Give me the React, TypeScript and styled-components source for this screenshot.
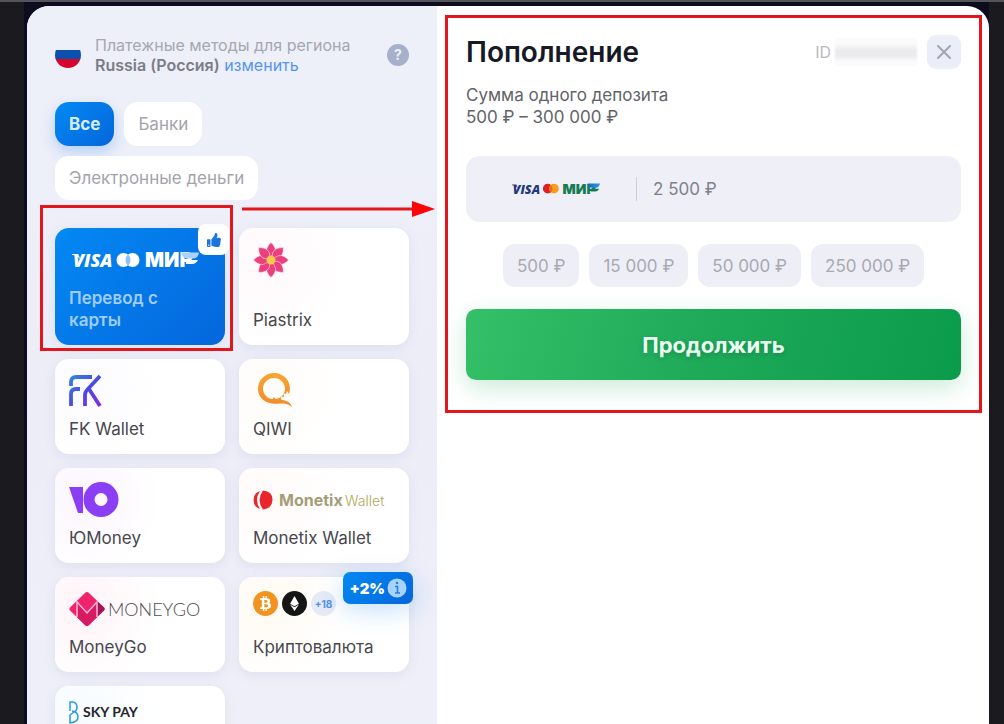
import React from "react";
import styled, { createGlobalStyle, css } from "styled-components";
import { FaBtc, FaEthereum, FaThumbsUp } from "react-icons/fa";

const GlobalStyle = createGlobalStyle`
  *, *::before, *::after { box-sizing: border-box; }
  body {
    margin: 0;
    background: #1b1b1f;
    font-family: Inter, "Noto Sans", sans-serif;
    color: #46474d;
  }
  button, input { font: inherit; color: inherit; }
  button { border: 0; padding: 0; cursor: pointer; }
  h1, p { margin: 0; }
  svg { overflow: visible; }
`;

const Page = styled.div`
  height: 100vh;
  overflow: hidden;
  border-top: 2px solid #54545a;
  padding: 0 15px 0 24px;
`;

const Backdrop = styled.div`
  min-height: 100%;
  padding: 4px 0 0 3px;
  background: #0c0c1e;
`;

const Modal = styled.main`
  display: flex;
  min-height: 100vh;
  border-radius: 22px 22px 0 0;
  background: #ffffff;
  overflow: hidden;
`;

const Methods = styled.section`
  flex: 0 0 410px;
  padding: 29px 28px 28px;
  background: linear-gradient(180deg, #edf0f9, #ededf8 50%, #eef0f8);
`;

const Region = styled.header`
  display: flex;
  align-items: center;
  gap: 14px;
  height: 40px;
  font-size: 16px;
  line-height: 20px;
  color: #a6a7af;

  svg { flex: none; }
  p { flex: 1; }
  strong { font-weight: 600; color: #7b7d86; }
  a { color: #5595f0; text-decoration: none; }
`;

const Help = styled.button`
  width: 22px;
  height: 22px;
  border-radius: 50%;
  background: #a6b0ca;
  color: #eef0f9;
  font-size: 14px;
  font-weight: 700;
  line-height: 22px;
`;

const Tabs = styled.nav`
  display: flex;
  flex-wrap: wrap;
  gap: 10px;
  margin: 27px 0 28px;
`;

const Tab = styled.button<{ $active?: boolean }>`
  height: 44px;
  padding: 0 14px;
  border-radius: 14px;
  background: #ffffff;
  color: #a3a4aa;
  font-size: 17px;
  ${(p) =>
    p.$active &&
    css`
      background: linear-gradient(135deg, #0389f3, #0566dc);
      color: #d9ecff;
      font-weight: 700;
      box-shadow: 0 6px 14px rgba(20, 120, 240, 0.25);
    `}
`;

const Grid = styled.div`
  display: grid;
  grid-template-columns: 1fr 1fr;
  gap: 14px;
`;

const Cell = styled.div`
  position: relative;
  display: grid;
`;

const Card = styled.button<{ $active?: boolean; $tint?: string }>`
  display: flex;
  flex-direction: column;
  align-items: flex-start;
  justify-content: space-between;
  gap: 9px;
  min-height: 95px;
  padding: 14px;
  border-radius: 14px;
  text-align: left;
  font-size: 17px;
  line-height: 22px;
  background: ${(p) =>
    p.$active
      ? "linear-gradient(135deg, #0389f3, #0566dc)"
      : `radial-gradient(circle at 16% 32%, ${p.$tint ?? "#ffffff"}, #ffffff 50%)`};
  box-shadow: 0 3px 12px rgba(90, 110, 170, 0.1);
  ${(p) => p.$active && css`color: #9fcdfc; font-weight: 600;`}
`;

const LogoRow = styled.span<{ $top?: boolean }>`
  display: flex;
  align-items: ${(p) => (p.$top ? "flex-start" : "center")};
  gap: 4px;
  height: 36px;
`;

const Coin = styled.span<{ $bg: string }>`
  display: grid;
  place-items: center;
  width: 25px;
  height: 25px;
  border-radius: 50%;
  background: ${(p) => p.$bg};
  color: #ffffff;
`;

const MoreCoins = styled(Coin)`
  color: #4f90ea;
  font-size: 10px;
  font-weight: 700;
`;

const Liked = styled.span`
  position: absolute;
  top: -4px;
  right: -4px;
  display: grid;
  place-items: center;
  width: 31px;
  height: 31px;
  border-radius: 8px;
  background: #ffffff;
  color: #1a76df;
`;

const Bonus = styled.span`
  position: absolute;
  top: -5px;
  right: -4px;
  display: flex;
  align-items: center;
  gap: 2px;
  height: 32px;
  padding: 0 6px;
  border-radius: 7px;
  background: linear-gradient(135deg, #0389f3, #0566dc);
  box-shadow: 0 6px 24px rgba(20, 130, 240, 0.25);
  color: #ffffff;
  font-size: 15px;
  font-weight: 900;
`;

const Outline = styled.span`
  position: absolute;
  border: 3px solid #e3161b;
  pointer-events: none;
`;

const CardOutline = styled(Outline)`
  inset: -23px -8px -6px -15px;
`;

const PanelOutline = styled(Outline)`
  inset: -20px -21px -33px -21px;
`;

const Arrow = styled.svg`
  position: absolute;
  z-index: 2;
  top: -28px;
  left: 187px;
  pointer-events: none;
`;

const Deposit = styled.section`
  flex: 1;
  min-width: 0;
  padding: 29px 28px 28px 29px;
`;

const Form = styled.form`
  position: relative;
`;

const Head = styled.header`
  display: flex;
  align-items: center;
  height: 34px;
`;

const Title = styled.h1`
  flex: 1;
  color: #171a26;
  font-size: 28px;
  font-weight: 600;
  line-height: 34px;
`;

const Account = styled.span`
  display: flex;
  align-items: center;
  gap: 4px;
  color: #b9bac0;
  font-size: 16px;
`;

const Masked = styled.span`
  width: 82px;
  height: 28px;
  background: linear-gradient(180deg, #fcfbfc 20%, #ebeaec 45%, #ebeaec 65%, #fcfbfc 85%);
  filter: blur(1px);
`;

const Close = styled.button`
  display: grid;
  place-items: center;
  width: 34px;
  height: 34px;
  margin-left: 10px;
  border-radius: 9px;
  background: #ebeef8;
`;

const Limits = styled.p`
  margin: 15px 0 28px;
  color: #626369;
  font-size: 17px;
  line-height: 22px;
`;

const AmountBox = styled.label`
  display: flex;
  align-items: center;
  height: 66px;
  padding-left: 44px;
  border-radius: 14px;
  background: #eeeff7;
`;

const Amount = styled.input`
  flex: 1;
  min-width: 0;
  height: 24px;
  margin-left: 36px;
  padding: 0 0 0 16px;
  border: 0;
  border-left: 1px solid #cdced6;
  outline: 0;
  background: transparent;
  color: #808188;
  font-size: 17px;
`;

const Presets = styled.div`
  display: flex;
  flex-wrap: wrap;
  justify-content: center;
  gap: 10px;
  margin: 22px 0;
`;

const Preset = styled.button`
  height: 43px;
  padding: 0 14px;
  border-radius: 12px;
  background: #eeeef7;
  color: #a8a9b1;
  font-size: 17px;
`;

const Submit = styled.button`
  width: 100%;
  height: 71px;
  border-radius: 10px;
  background: linear-gradient(105deg, #34bf68, #1fab5a 45%, #0a9b4b);
  box-shadow: 0 8px 24px rgba(20, 165, 85, 0.22);
  color: #ecfff3;
  font-size: 22px;
  font-weight: 700;
  text-shadow: 0 2px 4px rgba(0, 70, 30, 0.25);
`;

const PaymentSystems = ({ width, mono }: { width: number; mono?: boolean }) => (
  <svg width={width} height={(width * 28) / 130} viewBox="0 -4 130 28" role="img" aria-label="Visa Mastercard МИР">
    <defs>
      <linearGradient id="wing" x1="0" x2="1">
        <stop offset="0" stopColor="#1668c4" />
        <stop offset="1" stopColor="#2a9be8" />
      </linearGradient>
    </defs>
    <text x="4" y="17" fontFamily="Open Sans" fontWeight="800" fontStyle="italic" fontSize="18" fill={mono ? "#fff" : "#22377c"}>VISA</text>
    <path d="M3 4h6l3 6C10 7 7 5 3 5z" fill={mono ? "#fff" : "#22377c"} />
    <circle cx="54.500" cy="10" r="7" fill={mono ? "#fff" : "#e11d25"} />
    <circle cx="63.500" cy="10" r="7" fill={mono ? "#fff" : "#f79e1b"} />
    <path d="M59 4.600a7 7 0 0 1 0 10.800a7 7 0 0 1 0-10.800z" fill={mono ? "#8dc1f8" : "#f2671f"} />
    <text x="76" y="17" fontFamily="Inter" fontWeight="900" fontSize="20" fill={mono ? "#fff" : "#167a55"}>МИР</text>
    <path d="M112 2.500h18q-1 6-6 6h-6q-4 0-6-6z" fill={mono ? "#a9d2fc" : "url(#wing)"} />
    <path d="M117 10h12q-2 4-6 4h-6z" fill={mono ? "#fff" : "#167a55"} />
  </svg>
);

const PiastrixLogo = () => (
  <svg width="36" height="36" viewBox="-18 -18 36 36" aria-hidden="true">
    {[0, 45, 90, 135, 180, 225, 270, 315].map((a) => (
      <path key={a} transform={`rotate(${a})`} d="M0-2C-6-6-6-12 0-17.500C6-12 6-6 0-2z" fill="#ec3f7e" stroke="#ffeaf1" strokeWidth=".6" />
    ))}
    <circle r="4.500" fill="#f9c94a" />
  </svg>
);

const FkLogo = () => (
  <svg width="34" height="34" viewBox="0 0 34 34" fill="none" strokeWidth="3.800" aria-hidden="true">
    <defs>
      <linearGradient id="fk" x1="0" y1="0" x2="34" y2="34" gradientUnits="userSpaceOnUse">
        <stop stopColor="#2e8be0" />
        <stop offset=".5" stopColor="#4a4be0" />
        <stop offset="1" stopColor="#8d25ee" />
      </linearGradient>
    </defs>
    <path d="M2 12V8q0-5 5-5h16M2 32V20q0-5 5-5h4M31 2L18 16q-2 2-2 5v11M20 15L31 32" stroke="url(#fk)" />
  </svg>
);

const QiwiLogo = () => (
  <svg width="40" height="38" viewBox="0 0 40 38" aria-hidden="true">
    <defs>
      <linearGradient id="qiwi" x1="0" y1="0" x2="0" y2="1">
        <stop stopColor="#f6a632" />
        <stop offset="1" stopColor="#f08a2b" />
      </linearGradient>
    </defs>
    <path
      fillRule="evenodd"
      fill="url(#qiwi)"
      d="M21 1c9 0 16 7 16 15.500 0 2-.4 3.800-1 5.500l-2-3-1 3-2.500-1 .500 4-3.500-.500 1 3.500c4 0 9 2 10.500 7-5-4-9-3.500-12.500-3.500C14 33 5 27 5 17 5 8 12 1 21 1zM21 6c-6 0-11 5-11 10.500S14.500 27 20 27l.500-2 2.500 2c5-1 9-5 9-10.500S27 6 21 6z"
    />
  </svg>
);

const YooLogo = () => (
  <svg width="50" height="36" viewBox="0 0 50 36" fill="#8b3ff5" aria-hidden="true">
    <path d="M0 5h14v26H9z" />
    <path fillRule="evenodd" d="M32 0a17.500 17.500 0 1 1 0 35a17.500 17.500 0 0 1 0-35zm0 11a6.500 6.500 0 1 0 0 13a6.500 6.500 0 0 0 0-13z" />
  </svg>
);

const MonetixLogo = () => (
  <svg width="134" height="28" viewBox="0 -2 134 28" role="img" aria-label="Monetix Wallet">
    <path d="M7 3a9.500 9.500 0 0 0 0 18q-6-9 0-18z" fill="#e8262d" />
    <path d="M10 2.500q10 1 9.500 9.500T10 21.500Q3 12 10 2.500z" fill="#e8262d" />
    <text x="26" y="18" fontFamily="Inter" fontWeight="700" fontSize="16" fill="#a49d77">Monetix</text>
    <text x="92" y="18" fontFamily="Inter" fontWeight="300" fontSize="14" fill="#b3a55b">Wallet</text>
  </svg>
);

const MoneyGoLogo = () => (
  <svg width="134" height="36" viewBox="0 0 134 36" role="img" aria-label="MoneyGo">
    <path d="M16 2q2-2 4 0l15 14.500q1.500 1.500 0 3L20 34q-2 2-4 0L1 19.500q-1.500-1.500 0-3z" fill="#f0246d" />
    <path d="M28 10l7 6.500q1.500 1.500 0 3L28 26z" fill="#a3155a" />
    <path d="M8 26V11l10 11l10-11v15L20 34q-2 2-4 0z" fill="#d61b62" />
    <path d="M8 26V11l10 11L28 11v15" fill="none" stroke="#ffb5d2" strokeWidth="1.500" />
    <text x="39" y="25" fontFamily="Lato" fontWeight="300" fontSize="18" fill="#4c4c50">MONEYGO</text>
  </svg>
);

const SkyPayLogo = () => (
  <svg width="80" height="26" viewBox="0 0 80 26" role="img" aria-label="Sky Pay">
    <path d="M1 11V2h3q4 1 4 5t-3 5L1 15v8q8-1 8-6t-6-6" fill="none" stroke="#2d9bd8" strokeWidth="1.500" />
    <text x="14" y="17" fontFamily="Lato" fontWeight="700" fontSize="14" fill="#25262b">SKY PAY</text>
  </svg>
);

const InfoMark = () => (
  <svg width="20" height="20" viewBox="0 0 20 20" aria-hidden="true">
    <circle cx="10" cy="10" r="9.500" fill="#a9d3fb" />
    <path d="M8 8.500h2.500V15M8 15h5" stroke="#2a7fdc" strokeWidth="1.600" fill="none" />
    <circle cx="10" cy="5" r="1.300" fill="#2a7fdc" />
  </svg>
);

const presets = ["500 ₽", "15 000 ₽", "50 000 ₽", "250 000 ₽"];

export default function App() {
  return (
    <Page>
      <GlobalStyle />
      <Backdrop>
        <Modal>
          <Methods>
            <Region>
              <svg width="26" height="26" viewBox="0 0 26 26" aria-hidden="true">
                <clipPath id="flag"><circle cx="13" cy="13" r="13" /></clipPath>
                <g clipPath="url(#flag)">
                  <path d="M0 8h26v9H0z" fill="#0b50ad" />
                  <path d="M0 17h26v9H0z" fill="#d5072f" />
                </g>
              </svg>
              <p>
                Платежные методы для региона
                <br />
                <strong>Russia (Россия)</strong> <a href="#region">изменить</a>
              </p>
              <Help type="button">?</Help>
            </Region>
            <Tabs>
              <Tab $active>Все</Tab>
              <Tab>Банки</Tab>
              <Tab>Электронные деньги</Tab>
            </Tabs>
            <Grid>
              <Cell>
                <Card $active>
                  <LogoRow><PaymentSystems width={130} mono /></LogoRow>
                  Перевод с карты
                </Card>
                <Liked><FaThumbsUp size={14} /></Liked>
                <CardOutline />
                <Arrow width="194" height="18" viewBox="0 0 194 18" aria-hidden="true">
                  <path d="M0 9h172" stroke="#e3161b" strokeWidth="3" />
                  <path d="M170 1l23 8-23 8z" fill="#fa0508" />
                </Arrow>
              </Cell>
              <Card $tint="#fff8fa"><LogoRow><PiastrixLogo /></LogoRow>Piastrix</Card>
              <Card $tint="#fbfaff"><LogoRow><FkLogo /></LogoRow>FK Wallet</Card>
              <Card $tint="#fffcf8"><LogoRow><QiwiLogo /></LogoRow>QIWI</Card>
              <Card $tint="#fbf5ff"><LogoRow><YooLogo /></LogoRow>ЮMoney</Card>
              <Card $tint="#fffaf9"><LogoRow><MonetixLogo /></LogoRow>Monetix Wallet</Card>
              <Card $tint="#fff3f8"><LogoRow><MoneyGoLogo /></LogoRow>MoneyGo</Card>
              <Cell>
                <Card $tint="#fffaf2">
                  <LogoRow $top>
                    <Coin $bg="#f0931f"><FaBtc size={15} /></Coin>
                    <Coin $bg="#151515"><FaEthereum size={15} /></Coin>
                    <MoreCoins $bg="#e6eaf5">+18</MoreCoins>
                  </LogoRow>
                  Криптовалюта
                </Card>
                <Bonus>+2%<InfoMark /></Bonus>
              </Cell>
              <Card $tint="#f6fbff" aria-label="Sky Pay"><LogoRow $top><SkyPayLogo /></LogoRow></Card>
            </Grid>
          </Methods>
          <Deposit>
            <Form onSubmit={(e) => e.preventDefault()}>
              <Head>
                <Title>Пополнение</Title>
                <Account>ID <Masked /></Account>
                <Close type="button" aria-label="Закрыть">
                  <svg width="16" height="16" viewBox="0 0 16 16" aria-hidden="true">
                    <path d="M2 2l12 12M14 2L2 14" stroke="#a4a5ac" strokeWidth="2" strokeLinecap="round" />
                  </svg>
                </Close>
              </Head>
              <Limits>
                Сумма одного депозита
                <br />
                500 ₽ – 300 000 ₽
              </Limits>
              <AmountBox>
                <PaymentSystems width={90} />
                <Amount type="text" defaultValue="2 500 ₽" aria-label="Сумма" />
              </AmountBox>
              <Presets>
                {presets.map((p) => (
                  <Preset key={p} type="button">{p}</Preset>
                ))}
              </Presets>
              <Submit type="submit">Продолжить</Submit>
              <PanelOutline />
            </Form>
          </Deposit>
        </Modal>
      </Backdrop>
    </Page>
  );
}
